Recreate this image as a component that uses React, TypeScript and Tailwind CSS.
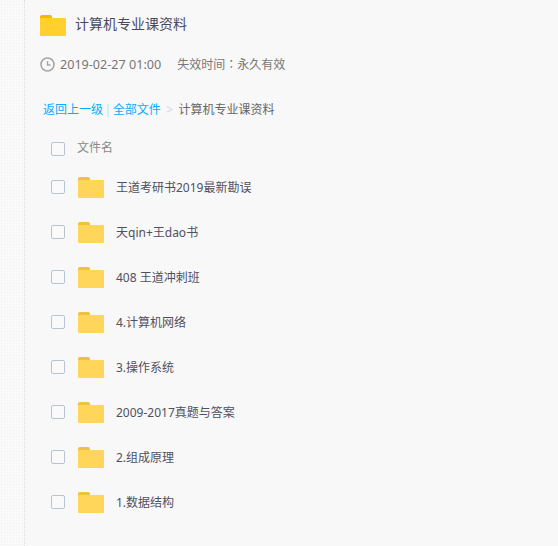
const files = [
  "王道考研书2019最新勘误",
  "天qin+王dao书",
  "408 王道冲刺班",
  "4.计算机网络",
  "3.操作系统",
  "2009-2017真题与答案",
  "2.组成原理",
  "1.数据结构",
];

const font = { fontFamily: '"Noto Sans", "Noto Sans CJK SC", sans-serif' };

const Folder = ({ body, tab }: { body: string; tab: string }) => (
  <svg width="26" height="21" viewBox="0 0 26 21" className="shrink-0">
    <path d="M0 2a2 2 0 0 1 2-2h8a2 2 0 0 1 2 2v2H0z" fill={tab} />
    <path d="M0 4a1 1 0 0 1 1-1h24a1 1 0 0 1 1 1v16a1 1 0 0 1-1 1H1a1 1 0 0 1-1-1z" fill={body} />
  </svg>
);

const Checkbox = () => (
  <span className="block w-[14px] h-[14px] shrink-0 rounded-[2px] border border-[#b8c4d6] bg-[#fafafa]" />
);

const Clock = () => (
  <svg width="15" height="15" viewBox="0 0 15 15" fill="none" stroke="#a6a6a6" className="shrink-0">
    <circle cx="7.5" cy="7.5" r="6.5" strokeWidth="1.6" />
    <path d="M7.5 4v4h3" strokeWidth="1.4" />
  </svg>
);

export default function App() {
  return (
    <div className="flex h-[546px] w-[558px] overflow-hidden bg-[#f8f8f8]" style={font}>
      <div className="w-[25px] shrink-0 border-r border-dotted border-[#dcdcdc] bg-[radial-gradient(#efefef_0.5px,#fafafa_0.5px)] bg-[length:3px_3px]" />
      <div className="flex-1">
        <div className="flex items-start gap-[9px] pl-[15px] pt-[15px]">
          <Folder body="#ffd02e" tab="#f5b800" />
          <span className="text-[14px] leading-[20px] -mt-px text-[#4a4a5c]">计算机专业课资料</span>
        </div>
        <div className="mt-[20px] flex items-center pl-[15px] text-[12px] leading-[16px] text-[#777777]">
          <Clock />
          <span className="ml-[5px] text-[12.6px]">2019-02-27 01:00</span>
          <span className="ml-[16px]">
            失效时间<span className="font-['Noto_Sans_CJK_TC']">：</span>永久有效
          </span>
        </div>
        <div className="mt-[28px] flex items-center pl-[18px] text-[12px] leading-[18px] text-[#09aaff]">
          <span>返回上一级</span>
          <span className="mx-[1.5px] text-[#b5dffa]">|</span>
          <span>全部文件</span>
          <span className="mx-[5.5px] text-[#c7d7e3]">&gt;</span>
          <span className="text-[#666666]">计算机专业课资料</span>
        </div>
        <div className="mt-[21px] flex items-center pl-[26px] text-[12px] leading-[18px] text-[#888888]">
          <Checkbox />
          <span className="ml-[12px] -mt-px">文件名</span>
        </div>
        <ul className="mt-[8px]">
          {files.map((name) => (
            <li key={name} className="flex h-[45px] items-center pl-[26px]">
              <span className="-mt-px">
                <Checkbox />
              </span>
              <span className="ml-[13px]">
                <Folder body="#ffd659" tab="#f0c040" />
              </span>
              <span className="ml-[12px] text-[12px] leading-[18px] text-[#50505f]">{name}</span>
            </li>
          ))}
        </ul>
      </div>
    </div>
  );
}
